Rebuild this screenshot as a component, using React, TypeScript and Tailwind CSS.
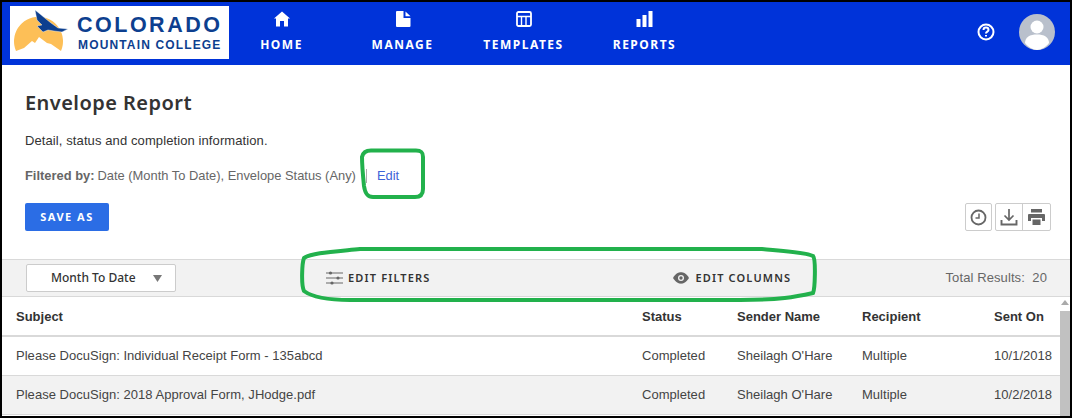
const navItems = [
  { label: "HOME", icon: "home" },
  { label: "MANAGE", icon: "manage" },
  { label: "TEMPLATES", icon: "templates" },
  { label: "REPORTS", icon: "reports" },
];

const rows = [
  { subject: "Please DocuSign: Individual Receipt Form - 135abcd", date: "10/1/2018", striped: false },
  { subject: "Please DocuSign: 2018 Approval Form, JHodge.pdf", date: "10/2/2018", striped: true },
];

function NavIcon({ name }: { name: string }) {
  if (name === "home") {
    return (
      <svg width="16" height="16" viewBox="0 0 16 16" fill="white">
        <path d="M8 0.5 L16 7.5 L14 7.5 L14 15.5 L10 15.5 L10 10 L6 10 L6 15.5 L2 15.5 L2 7.5 L0 7.5 Z" />
      </svg>
    );
  }
  if (name === "manage") {
    return (
      <svg width="16" height="16" viewBox="0 0 16 16" fill="white">
        <path d="M1 1 Q1 0 2 0 L8.5 0 L8.5 7 L15.5 7 L15.5 15 Q15.5 16 14.5 16 L2 16 Q1 16 1 15 Z" />
        <path d="M10.5 0.5 L15.5 5.2 L10.5 5.2 Z" />
      </svg>
    );
  }
  if (name === "templates") {
    return (
      <svg width="16" height="16" viewBox="0 0 16 16" fill="none" stroke="white" strokeWidth="1.8">
        <rect x="1" y="1" width="14" height="14" rx="1.5" />
        <path d="M1 5.5 H15 M5.5 5.5 V15 M10 5.5 V15" strokeWidth="1.4" />
      </svg>
    );
  }
  return (
    <svg width="17" height="16" viewBox="0 0 17 16" fill="white">
      <rect x="0.5" y="8" width="4" height="8" />
      <rect x="6.5" y="4" width="4" height="12" />
      <rect x="12.5" y="0" width="4" height="16" />
    </svg>
  );
}

function Logo() {
  return (
    <div className="flex h-[53px] w-[219px] items-center bg-white">
      <svg width="68" height="53" viewBox="0 0 68 53" className="shrink-0">
        <path d="M6 45 A24.5 24.5 0 1 1 51 45 L41 38 L37 37 L29 31 L25 37 L22 35 L14 42 Z" fill="#fdbf57" />
        <path d="M25 4 L30 8 L36 13 L41 17 L48 22 L58 23 L52 26 L44 25 L38 24 L33 26 L27 20 L32 19 L27 14 Z" fill="#0d3f8f" stroke="white" strokeWidth="0.4" />
      </svg>
      <div className="ml-[-1px] flex flex-col font-['Liberation_Sans',sans-serif] font-bold text-[#0d3f8f]">
        <span className="text-[21.5px] leading-[21px] tracking-[2.5px]">COLORADO</span>
        <span className="ml-[1px] mt-[3px] text-[12px] leading-[12px] tracking-[1.15px]">MOUNTAIN COLLEGE</span>
      </div>
    </div>
  );
}

function Header() {
  return (
    <header className="flex h-[63px] shrink-0 items-start bg-[#0033d9] pl-[8px] pt-[4px]">
      <Logo />
      <nav className="ml-[-8px] flex">
        {navItems.map((item) => (
          <div key={item.label} className="flex w-[121px] flex-col items-center pt-[5px]">
            <NavIcon name={item.icon} />
            <span className="mt-[10px] font-['Noto_Sans',sans-serif] text-[12px] font-bold leading-[16px] tracking-[1.5px] text-white">
              {item.label}
            </span>
          </div>
        ))}
      </nav>
      <div className="ml-auto mr-[15px] mt-[8px] flex items-center gap-[24px]">
        <svg width="18" height="18" viewBox="0 0 18 18" fill="none" stroke="white">
          <circle cx="9" cy="9" r="7.5" strokeWidth="2" />
          <path d="M6.5 7 C6.5 3.8 11.5 3.8 11.5 7 C11.5 8.6 9 8.6 9 10.5 M9 12 V13.5" strokeWidth="2" />
        </svg>
        <svg width="36" height="36" viewBox="0 0 36 36">
          <circle cx="18" cy="18" r="18" fill="#b9c0cc" />
          <circle cx="18" cy="13" r="6.5" fill="white" />
          <path d="M6 29 C6 23 11 20.5 18 20.5 C25 20.5 30 23 30 29 C27 33 22 36 18 36 C14 36 9 33 6 29 Z" fill="white" />
        </svg>
      </div>
    </header>
  );
}

function ActionButtons() {
  return (
    <div className="flex items-center gap-[3px] pr-[19px]">
      <button className="flex h-[28px] w-[27px] items-center justify-center rounded-[2px] border border-[#ccc] bg-white">
        <svg width="17" height="17" viewBox="0 0 17 17" fill="none" stroke="#666" strokeWidth="1.8">
          <circle cx="8.5" cy="8.5" r="7" />
          <path d="M9 4.5 V9 H5.5" strokeWidth="1.5" />
        </svg>
      </button>
      <div className="flex h-[28px] rounded-[2px] border border-[#ccc] bg-white">
        <div className="flex w-[27px] items-center justify-center border-r border-[#ccc]">
          <svg width="18" height="18" viewBox="0 0 18 18" fill="none" stroke="#666" strokeWidth="1.7">
            <path d="M9 1 V12 M4.5 7.5 L9 12 L13.5 7.5" />
            <path d="M1.5 12 V16.5 H16.5 V12" strokeWidth="1.9" />
          </svg>
        </div>
        <div className="flex w-[27px] items-center justify-center">
          <svg width="17" height="16" viewBox="0 0 17 16" fill="#666">
            <rect x="3" y="0" width="11" height="3.5" />
            <path d="M1 5 H16 Q17 5 17 6 V12 H14 V9 H3 V12 H0 V6 Q0 5 1 5 Z" />
            <rect x="4.5" y="10.5" width="8" height="5.5" />
          </svg>
        </div>
      </div>
    </div>
  );
}

function Toolbar() {
  return (
    <div className="flex h-[38px] shrink-0 items-center border-y border-[#d9d9d9] bg-[#f2f2f2] pl-[24px] pr-[23px]">
      <div className="flex h-[28px] w-[150px] items-center rounded-[2px] border border-[#ccc] bg-white pl-[24px] font-['Noto_Sans',sans-serif] text-[12px] font-medium text-[#333]">
        Month To Date
        <svg width="9" height="7" viewBox="0 0 9 7" fill="#777" className="ml-[17px]">
          <path d="M0 0 H9 L4.5 7 Z" />
        </svg>
      </div>
      <div className="ml-[150px] flex items-center gap-[5px]">
        <svg width="17" height="16" viewBox="0 0 17 16" stroke="#666" fill="#666">
          <path d="M0 3 H17 M0 8 H17 M0 13 H17" strokeWidth="1" />
          <circle cx="4.5" cy="3" r="1.6" stroke="none" />
          <circle cx="12" cy="8" r="1.6" stroke="none" />
          <circle cx="6" cy="13" r="1.6" stroke="none" />
        </svg>
        <span className="font-['Noto_Sans',sans-serif] text-[11px] font-semibold tracking-[1.15px] text-[#333]">EDIT FILTERS</span>
      </div>
      <div className="ml-[243px] flex items-center gap-[6px]">
        <svg width="16" height="12" viewBox="0 0 17 12">
          <path d="M0 6 C3 1 6 0 8.5 0 C11 0 14 1 17 6 C14 11 11 12 8.5 12 C6 12 3 11 0 6 Z" fill="#666" />
          <circle cx="8.5" cy="6" r="3.2" fill="#f2f2f2" />
          <circle cx="8.5" cy="6" r="1.8" fill="#666" />
        </svg>
        <span className="font-['Noto_Sans',sans-serif] text-[11px] font-semibold tracking-[1.15px] text-[#333]">EDIT COLUMNS</span>
      </div>
      <span className="ml-auto text-[13px] tracking-[0.1px] text-[#666]">Total Results:&nbsp; 20</span>
    </div>
  );
}

function ReportTable() {
  const grid = "grid grid-cols-[626px_95px_125px_132px_auto] pl-[14px]";
  return (
    <div className="flex min-h-0 flex-1">
      <div className="min-w-0 flex-1">
        <div className={`${grid} h-[40px] items-center border-b-2 border-[#d9d9d9] pt-[1px] text-[13px] font-bold text-[#333]`}>
          <span>Subject</span>
          <span>Status</span>
          <span>Sender Name</span>
          <span>Recipient</span>
          <span>Sent On</span>
        </div>
        {rows.map((row) => (
          <div
            key={row.date}
            className={`${grid} h-[39px] items-center border-b border-[#d9d9d9] text-[13px] tracking-[0.03px] text-[#444] ${row.striped ? "bg-[#f2f2f2]" : "bg-white"}`}
          >
            <span>{row.subject}</span>
            <span>Completed</span>
            <span>Sheilagh O'Hare</span>
            <span>Multiple</span>
            <span>{row.date}</span>
          </div>
        ))}
      </div>
      <div className="flex w-[10px] shrink-0 flex-col bg-white">
        <svg width="10" height="14" viewBox="0 0 10 14" fill="#aaa" className="shrink-0">
          <path d="M5 3 L9 8 H1 Z" />
        </svg>
        <div className="flex-1 bg-[#c1c1c1]" />
      </div>
    </div>
  );
}

export default function App() {
  return (
    <div className="relative flex h-[418px] w-[1072px] flex-col overflow-hidden border-2 border-black bg-white font-['Liberation_Sans',Arial,sans-serif]">
      <Header />

      <main className="flex h-[194px] shrink-0 flex-col pl-[23px]">
        <h1 className="mt-[24px] font-['Noto_Sans',sans-serif] text-[20px] font-semibold leading-[28px] tracking-[0.45px] text-[#333]">
          Envelope Report
        </h1>
        <p className="mt-[15px] text-[13px] leading-[18px] tracking-[0.1px] text-[#333]">Detail, status and completion information.</p>
        <div className="mt-[17px] flex h-[18px] items-center text-[12.9px] text-[#666]">
          <b className="mr-[3px]">Filtered by:</b>
          Date (Month To Date), Envelope Status (Any)
          <span className="ml-[10px] mr-[10px] h-[14px] w-px bg-[#aaa]" />
          <span className="text-[#3d63d8]">Edit</span>
        </div>
        <div className="mt-[18px] flex items-center justify-between">
          <button className="h-[28px] w-[84px] rounded-[2px] bg-[#2b6de5] font-['Noto_Sans',sans-serif] text-[11px] font-bold tracking-[1.5px] text-white">
            SAVE AS
          </button>
          <ActionButtons />
        </div>
      </main>

      <Toolbar />
      <ReportTable />

      {/* hand drawn green annotations over the page */}
      <svg width="70" height="56" viewBox="0 0 70 56" fill="none" stroke="#22b14c" strokeWidth="4" className="pointer-events-none absolute left-[357px] top-[144px]">
        <path d="M12 4.5 H57 C62 4.5 64 6 64 11 V43 C64 49 61 51 56 51 H14 C8 51 6 47 5 40 C4 30 3 18 3 11 C4 6 8 4.5 12 4.5 Z" />
      </svg>
      <svg width="522" height="58" viewBox="0 0 522 58" fill="none" stroke="#22b14c" strokeWidth="4" className="pointer-events-none absolute left-[298px] top-[243px]">
        <path d="M60 4 H462 C485 6 505 7 513 11 C516 14 515 44 513 48 C495 52 480 55 440 55 H50 C30 55 12 52 4 46 C1 40 2 18 4 13 C12 8 30 7 60 4 Z" />
      </svg>
    </div>
  );
}
